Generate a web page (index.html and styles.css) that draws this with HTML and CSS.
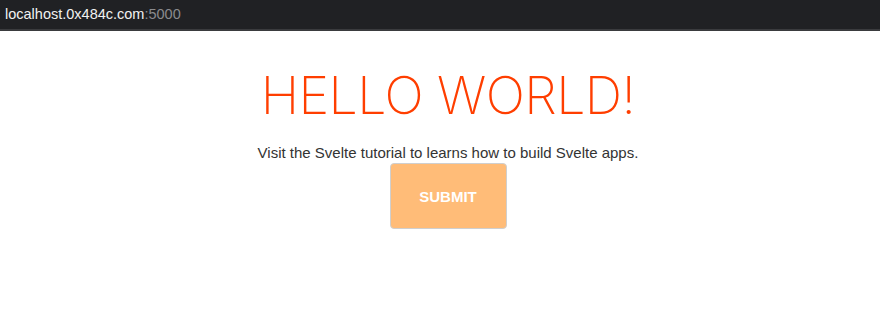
FILE: index.html
```html
<!DOCTYPE html>
<html lang="en">
<head>
    <meta charset="UTF-8">
    <title>Svelte app</title>
    <link rel="stylesheet" href="styles.css">
</head>
<body>

<div class="address-bar">
    <span class="host">localhost.0x484c.com</span><span class="port">:5000</span>
</div>

<main>
    <h1>Hello world!</h1>
    <p>Visit the Svelte tutorial to learns how to build Svelte apps.</p>
    <button class="submit">Submit</button>
</main>

</body>
</html>
```

FILE: styles.css
```css
body {
    margin: 0;
    padding: 0;
    font-family: "Liberation Sans", Arial, sans-serif;
    color: #333;
    background: #fff;
}

/* полоса адреса сверху */
.address-bar {
    height: 29px;
    line-height: 28px;
    padding-left: 5px;
    background-color: #202124;
    border-bottom: 2px solid #3a3b3e;
    font-size: 14.5px;
}

.host {
    color: #f1f1f1;
}

.port {
    color: #8a8b8e;
}

main {
    text-align: center;
    padding: 16px 0 16px 16px;
}

h1 {
    font-family: Inter, Roboto, sans-serif;
    font-size: 52px;
    font-weight: 200;
    letter-spacing: -0.6px;
    color: #ff3e00;
    text-transform: uppercase;
    margin: 18px 0 17px;
    line-height: 1.2;
}

p {
    font-size: 15px;
    margin: 0;
}

.submit {
    width: 117px;
    height: 66px;
    margin-top: 2px;
    background-color: #ffbc78;
    color: #fff;
    border: 1px solid #cfcfcf;
    border-radius: 4px;
    font-family: "Liberation Sans", Arial, sans-serif;
    font-size: 15px;
    font-weight: bold;
    text-transform: uppercase;
}
```
